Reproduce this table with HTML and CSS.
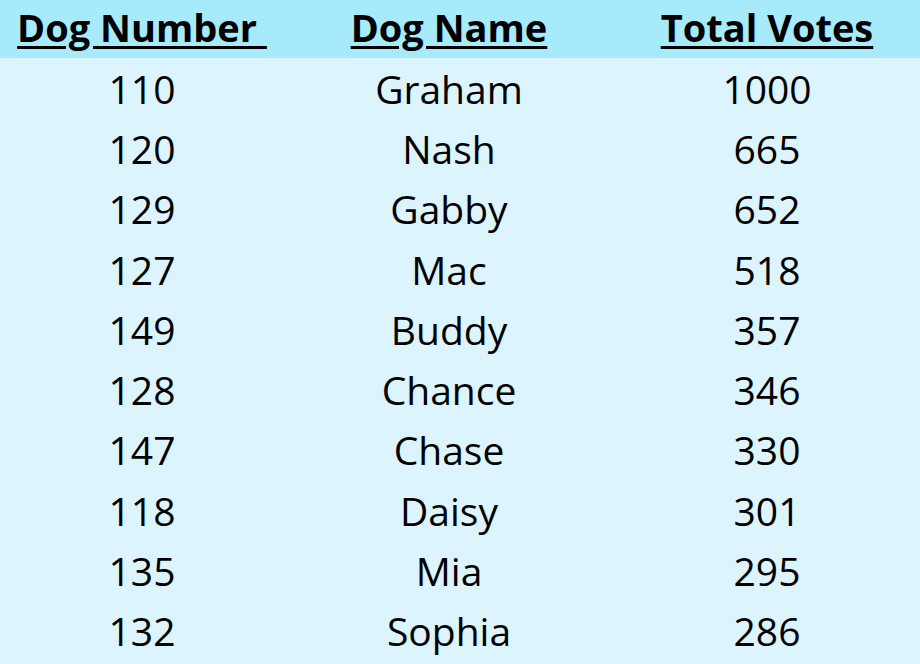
FILE: index.html
```html
<!DOCTYPE html>
<html>
<head>
<meta charset="utf-8">
<link rel="stylesheet" href="styles.css">
</head>
<body>
<div class="table">
  <div class="row head">
    <div class="cell"><span class="u">Dog Number&nbsp;</span></div>
    <div class="cell"><span class="u">Dog Name</span></div>
    <div class="cell"><span class="u">Total Votes</span></div>
  </div>
  <div class="row"><div class="cell">110</div><div class="cell">Graham</div><div class="cell">1000</div></div>
  <div class="row"><div class="cell">120</div><div class="cell">Nash</div><div class="cell">665</div></div>
  <div class="row"><div class="cell">129</div><div class="cell">Gabby</div><div class="cell">652</div></div>
  <div class="row"><div class="cell">127</div><div class="cell">Mac</div><div class="cell">518</div></div>
  <div class="row"><div class="cell">149</div><div class="cell">Buddy</div><div class="cell">357</div></div>
  <div class="row"><div class="cell">128</div><div class="cell">Chance</div><div class="cell">346</div></div>
  <div class="row"><div class="cell">147</div><div class="cell">Chase</div><div class="cell">330</div></div>
  <div class="row"><div class="cell">118</div><div class="cell">Daisy</div><div class="cell">301</div></div>
  <div class="row"><div class="cell">135</div><div class="cell">Mia</div><div class="cell">295</div></div>
  <div class="row"><div class="cell">132</div><div class="cell">Sophia</div><div class="cell">286</div></div>
</div>
</body>
</html>
```
FILE: styles.css
```css
html, body {
  margin: 0;
  padding: 0;
  background: #dcf4fd;
}
body {
  width: 920px;
  height: 664px;
  overflow: hidden;
  font-family: "Open Sans", "Noto Sans", sans-serif;
  color: #000;
}
.table {
  display: flex;
  flex-direction: column;
}
.row {
  display: grid;
  grid-template-columns: 284px 330px 306px;
  height: 60.3px;
  align-items: center;
  font-size: 39px;
}
.row.head {
  height: 58px;
  background: #a6eafc;
  font-weight: 700;
  font-size: 38px;
  align-items: start;
}
.cell {
  text-align: center;
  line-height: 1;
}
.head .cell {
  padding-top: 8px;
}
.u {
  text-decoration: underline;
  text-decoration-thickness: 3px;
  text-underline-offset: 4px;
}
```
